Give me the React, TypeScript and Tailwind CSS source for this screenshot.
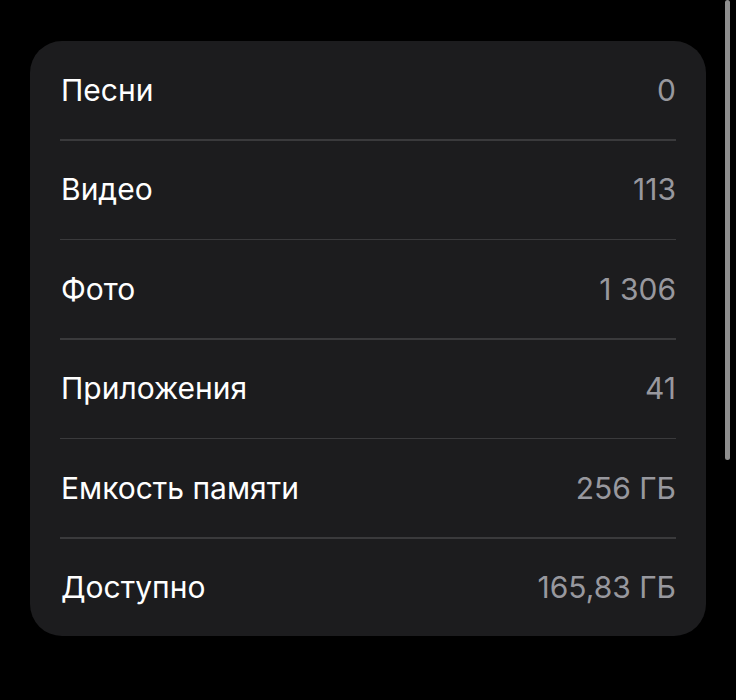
import React from "react";

const rows: [string, string][] = [
  ["Песни", "0"],
  ["Видео", "113"],
  ["Фото", "1 306"],
  ["Приложения", "41"],
  ["Емкость памяти", "256 ГБ"],
  ["Доступно", "165,83 ГБ"],
];

export default function App() {
  return (
    <div
      className="relative w-[736px] h-[700px] bg-black overflow-hidden"
      style={{ fontFamily: "Inter, 'Noto Sans', sans-serif" }}
    >
      <div className="absolute right-[6px] top-0 w-[5px] h-[460px] rounded-full bg-[#8e8e8e]" />
      <div className="ml-[30px] mt-[41px] w-[676px] h-[595px] rounded-[32px] bg-[#1c1c1e] flex flex-col">
        {rows.map(([label, value], i) => (
          <div key={label} className="flex flex-col">
            <div className="flex items-center justify-between pl-[31px] pr-[30px] h-[98px]">
              <span className="text-[30px] font-normal text-white tracking-normal">{label}</span>
              <span className="text-[30px] font-normal text-[#98989e] tracking-normal">{value}</span>
            </div>
            {i < rows.length - 1 && <div className="ml-[30px] mr-[30px] h-[1.5px] bg-[#3a3a3c]" />}
          </div>
        ))}
      </div>
    </div>
  );
}
